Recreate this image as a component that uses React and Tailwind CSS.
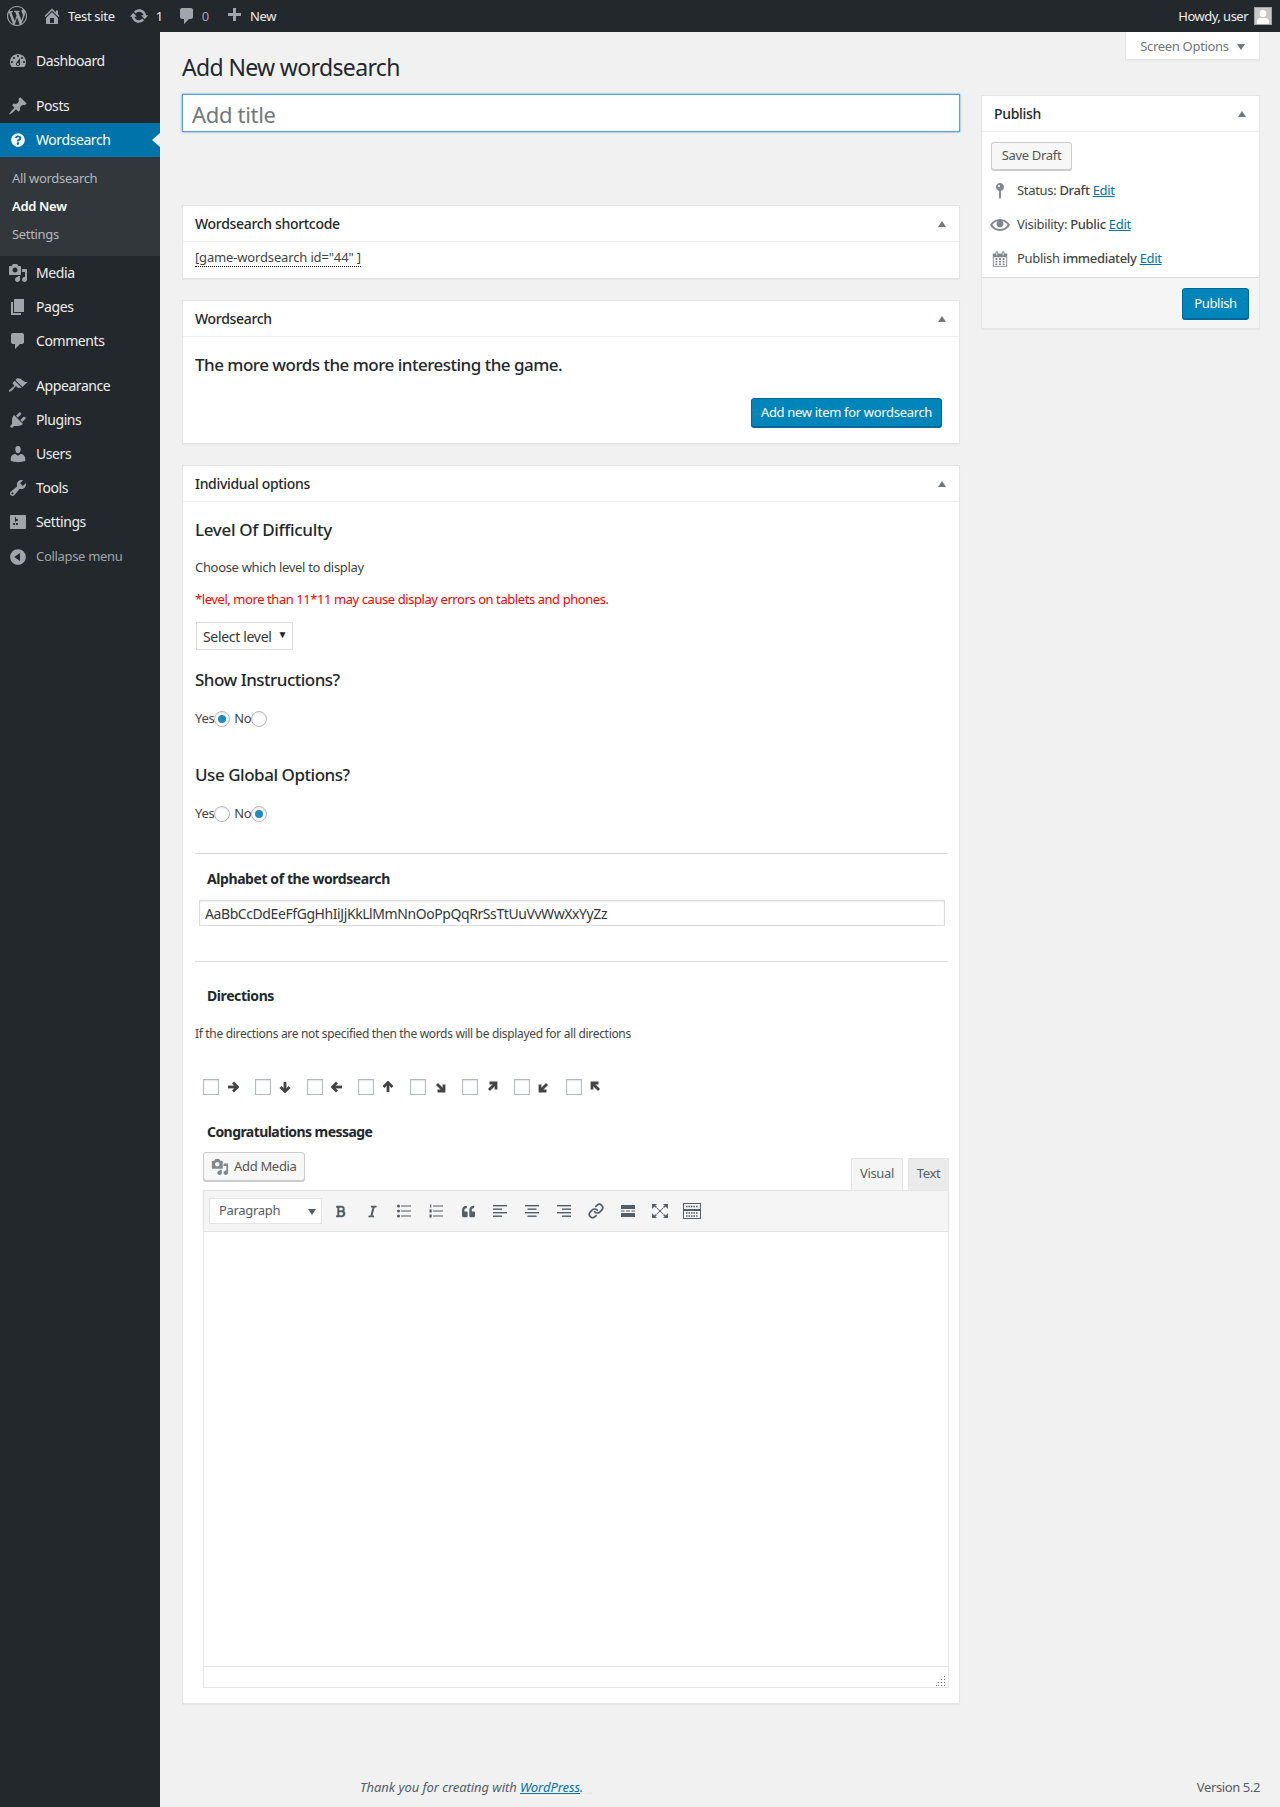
import React from 'react';
import { FaBold, FaItalic, FaQuoteLeft, FaQuestionCircle, FaUser } from 'react-icons/fa';
import { Link as LinkIcon } from 'lucide-react';

// dashicons paths, all on a 20x20 box
const icons = {
  logo: 'M20 10c0-5.51-4.49-10-10-10C4.48 0 0 4.49 0 10c0 5.52 4.48 10 10 10 5.51 0 10-4.48 10-10zM7.78 15.37L4.37 6.22c.55-.02 1.17-.08 1.17-.08.5-.06.44-1.13-.06-1.11 0 0-1.45.11-2.37.11-.18 0-.37 0-.58-.01C4.12 2.69 6.87 1.11 10 1.11c2.33 0 4.45.87 6.05 2.34-.68-.11-1.65.39-1.65 1.58 0 .74.45 1.36.9 2.1.35.61.55 1.36.55 2.46 0 1.49-1.4 5-1.4 5l-3.03-8.37c.54-.02.82-.17.82-.17.5-.05.44-1.25-.06-1.22 0 0-1.44.12-2.38.12-.87 0-2.33-.12-2.33-.12-.5-.03-.56 1.2-.06 1.22l.92.08 1.26 3.41zM17.41 10c.24-.64.74-1.87.43-4.25.7 1.29 1.05 2.71 1.05 4.25 0 3.29-1.73 6.24-4.4 7.78.97-2.59 1.94-5.2 2.92-7.78zM6.1 18.09C3.12 16.65 1.11 13.53 1.11 10c0-1.3.23-2.48.72-3.59C3.25 10.3 4.67 14.2 6.1 18.09zm4.03-6.63l2.58 6.98c-.86.29-1.76.45-2.71.45-.79 0-1.57-.11-2.29-.33.81-2.38 1.62-4.74 2.42-7.1z',
  home: 'M16 8.5l1.53 1.53-1.06 1.06L10 4.62l-6.47 6.47-1.06-1.06L10 2.5l4 4v-2h2v4zm-6-2.46l6 5.99V18H4v-5.97zM12 17v-5H8v5h4z',
  update: 'M10.2 3.28c3.53 0 6.43 2.61 6.92 6h2.08l-3.5 4-3.5-4h2.32c-.45-1.97-2.21-3.45-4.32-3.45-1.45 0-2.73.71-3.54 1.78L4.95 5.66C6.23 4.2 8.11 3.28 10.2 3.28zm-.4 13.44c-3.52 0-6.43-2.61-6.92-6H.8l3.5-4c1.17 1.33 2.33 2.67 3.5 4H5.48c.45 1.97 2.21 3.45 4.32 3.45 1.45 0 2.73-.71 3.54-1.78l1.71 1.95c-1.28 1.46-3.15 2.38-5.25 2.38z',
  plus: 'M17 7v3h-5v5H9v-5H4V7h5V2h3v5h5z',
  dashboard: 'M3.76 16h12.48c1.1-1.37 1.76-3.11 1.76-5 0-4.42-3.58-8-8-8s-8 3.58-8 8c0 1.89.66 3.63 1.76 5zM10 4c.55 0 1 .45 1 1s-.45 1-1 1-1-.45-1-1 .45-1 1-1zM6 6c.55 0 1 .45 1 1s-.45 1-1 1-1-.45-1-1 .45-1 1-1zm8 0c.55 0 1 .45 1 1s-.45 1-1 1-1-.45-1-1 .45-1 1-1zm-5.37 5.55L12 7v6c0 1.1-.9 2-2 2s-2-.9-2-2c0-.57.24-1.08.63-1.45zM4 10c.55 0 1 .45 1 1s-.45 1-1 1-1-.45-1-1 .45-1 1-1zm12 0c.55 0 1 .45 1 1s-.45 1-1 1-1-.45-1-1 .45-1 1-1zm-5 3c0-.55-.45-1-1-1s-1 .45-1 1 .45 1 1 1 1-.45 1-1z',
  post: 'M10.44 3.02l1.82-1.82 6.36 6.35-1.83 1.82c-1.05-.68-2.48-.57-3.41.36l-.75.75c-.92.93-1.04 2.35-.35 3.41l-1.83 1.82-2.41-2.41-2.8 2.79c-.42.42-3.38 2.71-3.8 2.29s1.86-3.39 2.28-3.81l2.79-2.79L4.1 9.36l1.83-1.82c1.05.69 2.48.57 3.4-.36l.75-.75c.93-.92 1.05-2.35.36-3.41z',
  media: 'M13 11V4c0-.55-.45-1-1-1h-1.67L9 1H5L3.67 3H2c-.55 0-1 .45-1 1v7c0 .55.45 1 1 1h10c.55 0 1-.45 1-1zM7 4.5c1.38 0 2.5 1.12 2.5 2.5S8.38 9.5 7 9.5 4.5 8.38 4.5 7 5.62 4.5 7 4.5zM14 6h5v10.5c0 1.38-1.12 2.5-2.5 2.5S14 17.88 14 16.5s1.12-2.5 2.5-2.5c.17 0 .34.02.5.05V9h-3V6zm-4 8.05V13h2v3.5c0 1.38-1.12 2.5-2.5 2.5S7 17.88 7 16.5 8.12 14 9.5 14c.17 0 .34.02.5.05z',
  page: 'M6 15V2h10v13H6zm-1 1h8v2H3V5h2v11z',
  comment: 'M5 2h9c1.1 0 2 .9 2 2v7c0 1.1-.9 2-2 2h-2l-5 5v-5H5c-1.1 0-2-.9-2-2V4c0-1.1.9-2 2-2z',
  appearance: 'M14.48 11.06L7.41 3.99l1.5-1.5c.5-.56 2.3-.47 3.51.32 1.21.8 1.43 1.28 2.91 2.1 1.18.64 2.45 1.26 4.45.85zm-.71.71L6.7 4.7 4.93 6.47c-.39.39-.39 1.02 0 1.41l1.06 1.06c.39.39.39 1.03 0 1.42-.6.6-1.43 1.11-2.21 1.69-.35.26-.7.53-1.01.84C1.43 13.23.4 14.91 1.06 15.57c.66.66 2.34-.37 3.68-1.71.31-.31.58-.66.84-1.01.58-.78 1.09-1.61 1.69-2.21.39-.39 1.03-.39 1.42 0l1.06 1.06c.39.39 1.02.39 1.41 0z',
  plugins: 'M13.11 4.36L9.87 7.6 8 5.73l3.24-3.24c.35-.34 1.05-.2 1.56.32.52.51.66 1.21.31 1.55zm-8 1.77l.91-1.12 9.01 9.01-1.19.84c-.71.71-2.63 1.16-3.82 1.16H6.14L4.9 17.26c-.59.59-1.54.59-2.12 0-.59-.58-.59-1.53 0-2.12l1.24-1.24v-3.88c0-1.13.4-3.19 1.09-3.89zm7.26 3.97l3.24-3.24c.34-.35 1.04-.21 1.55.31.52.51.66 1.21.31 1.55l-3.24 3.25z',
  users: 'M10 9.25c-2.27 0-2.73-3.44-2.73-3.44C7 4.02 7.82 2 9.97 2c2.16 0 2.98 2.02 2.71 3.81 0 0-.41 3.44-2.68 3.44zm0 2.57L12.72 10c2.39 0 4.52 2.33 4.52 4.53v2.49s-3.65 1.13-7.24 1.13c-3.65 0-7.24-1.13-7.24-1.13v-2.49c0-2.25 1.94-4.48 4.47-4.48z',
  tools: 'M16.68 9.77c-1.34 1.34-3.3 1.67-4.95.99l-5.41 6.52c-.99.99-2.59.99-3.58 0s-.99-2.59 0-3.57l6.52-5.42c-.68-1.65-.35-3.61.99-4.95 1.28-1.28 3.12-1.62 4.72-1.06l-2.89 2.89 2.82 2.82 2.86-2.87c.53 1.58.18 3.39-1.08 4.65zM3.81 16.21c.4.39 1.04.39 1.43 0 .4-.4.4-1.04 0-1.43-.39-.4-1.03-.4-1.43 0-.39.39-.39 1.03 0 1.43z',
  settings: 'M18 16V4c0-.55-.45-1-1-1H3c-.55 0-1 .45-1 1v12c0 .55.45 1 1 1h14c.55 0 1-.45 1-1zM8 11h1c.55 0 1 .45 1 1s-.45 1-1 1H8v1.5c0 .28-.22.5-.5.5s-.5-.22-.5-.5V13H6c-.55 0-1-.45-1-1s.45-1 1-1h1V5.5c0-.28.22-.5.5-.5s.5.22.5.5V7h1c.55 0 1 .45 1 1s-.45 1-1 1h-1v5.5c0 .28-.22.5-.5.5s-.5-.22-.5-.5V9z',
  collapse: 'M10 2.16c4.33 0 7.84 3.51 7.84 7.84s-3.51 7.84-7.84 7.84S2.16 14.33 2.16 10 5.71 2.16 10 2.16zm2 11.72V6.12L6.18 9.97z',
  pin: 'M14 6c0 1.86-1.28 3.41-3 3.86V16c0 1-1 2-1 2s-1-1-1-2V9.86C7.28 9.41 6 7.86 6 6c0-2.21 1.79-4 4-4s4 1.79 4 4zM8 5c0 .55.45 1 1 1s1-.45 1-1-.45-1-1-1-1 .45-1 1z',
  eye: 'M19.7 9.4C17.7 6 14 3.9 10 3.9S2.3 6 .3 9.4L0 10l.3.6c2 3.4 5.7 5.5 9.7 5.5s7.7-2.1 9.7-5.5l.3-.6-.3-.6zM10 14.1c-3.1 0-6-1.6-7.7-4.1C3.6 8 5.7 6.6 8 6.1c-.9.6-1.5 1.7-1.5 2.9 0 1.9 1.6 3.5 3.5 3.5s3.5-1.6 3.5-3.5c0-1.2-.6-2.3-1.5-2.9 2.3.5 4.4 1.9 5.7 3.9-1.7 2.5-4.6 4.1-7.7 4.1z',
  calendar: 'M15 4h3v15H2V4h3V3c0-.41.15-.76.44-1.06.29-.29.65-.44 1.06-.44s.77.15 1.06.44c.29.3.44.65.44 1.06v1h4V3c0-.41.15-.76.44-1.06.29-.29.65-.44 1.06-.44s.77.15 1.06.44c.29.3.44.65.44 1.06v1zM6 3v2.5c0 .14.05.26.15.36.09.09.21.14.35.14s.26-.05.35-.14c.1-.1.15-.22.15-.36V3c0-.14-.05-.26-.15-.36-.09-.09-.21-.14-.35-.14s-.26.05-.35.14c-.1.1-.15.22-.15.36zm7 0v2.5c0 .14.05.26.14.36.1.09.22.14.36.14s.26-.05.36-.14c.09-.1.14-.22.14-.36V3c0-.14-.05-.26-.14-.36-.1-.09-.22-.14-.36-.14s-.26.05-.36.14c-.09.1-.14.22-.14.36zm4 15V8H3v10h14zM7 9v2H5V9h2zm2 0h2v2H9V9zm4 2V9h2v2h-2zm-6 1v2H5v-2h2zm2 0h2v2H9v-2zm4 2v-2h2v2h-2zm-6 1v2H5v-2h2zm4 2H9v-2h2v2zm4 0h-2v-2h2v2z',
};

const Dash = ({ name, className }) => (
  <svg viewBox="0 0 20 20" className={className} fill="currentColor" fillRule="evenodd">
    <path d={icons[name]} />
  </svg>
);

const menuTop = [{ label: 'Dashboard', icon: 'dashboard', cls: 'mt-3 mb-[11px]' }, { label: 'Posts', icon: 'post', cls: '' }];
const menuMid = [
  { label: 'Media', icon: 'media' },
  { label: 'Pages', icon: 'page' },
  { label: 'Comments', icon: 'comment' },
];
const menuBottom = [
  { label: 'Appearance', icon: 'appearance' },
  { label: 'Plugins', icon: 'plugins' },
  { label: 'Users', icon: 'users' },
  { label: 'Tools', icon: 'tools' },
  { label: 'Settings', icon: 'settings' },
];

const MenuItem = ({ label, icon, className = '' }) => (
  <div className={`flex h-[34px] items-center text-sm tracking-[-0.03em] text-[#eeeeee] ${className}`}>
    <Dash name={icon} className="ml-2 mr-2 h-5 w-5 text-[#a0a5aa]" />
    {label}
  </div>
);

const Sidebar = () => (
  <aside className="w-40 shrink-0 bg-[#23282d]">
    {menuTop.map((m) => (
      <MenuItem key={m.label} label={m.label} icon={m.icon} className={m.cls} />
    ))}
    <div className="relative flex h-[34px] items-center bg-[#0073aa] text-sm tracking-[-0.03em] text-white">
      <FaQuestionCircle className="ml-[11px] mr-[11px] h-[14px] w-[14px]" />
      Wordsearch
      <span className="absolute right-0 top-[10px] h-0 w-0 border-y-[7px] border-r-[8px] border-y-transparent border-r-[#f1f1f1]" />
    </div>
    <div className="bg-[#32373c] pb-2 pt-[7px] text-[13px] leading-[28px] text-[#b4b9be]">
      <div className="pl-3">All wordsearch</div>
      <div className="pl-3 font-semibold text-white">Add New</div>
      <div className="pl-3">Settings</div>
    </div>
    {menuMid.map((m) => (
      <MenuItem key={m.label} label={m.label} icon={m.icon} />
    ))}
    <div className="h-[11px]" />
    {menuBottom.map((m) => (
      <MenuItem key={m.label} label={m.label} icon={m.icon} />
    ))}
    <div className="flex h-[34px] items-center pt-px text-[13px] text-[#a0a5aa]">
      <Dash name="collapse" className="ml-2 mr-2 h-5 w-5" />
      Collapse menu
    </div>
  </aside>
);

const TopBar = () => (
  <header className="flex h-8 items-center justify-between bg-[#23282d] text-[13px] text-[#eeeeee]">
    <div className="flex items-center">
      <Dash name="logo" className="ml-[7px] h-5 w-5 text-[#a0a5aa]" />
      <Dash name="home" className="ml-[15px] h-5 w-5 text-[#a0a5aa]" />
      <span className="ml-[6px] pt-px">Test site</span>
      <Dash name="update" className="ml-[14px] h-5 w-5 text-[#a0a5aa]" />
      <span className="ml-[7px] pt-px">1</span>
      <Dash name="comment" className="ml-[14px] h-5 w-5 text-[#a0a5aa]" />
      <span className="ml-[5px] pt-px text-[#a0a5aa]">0</span>
      <Dash name="plus" className="ml-[15px] h-5 w-5 text-[#a0a5aa]" />
      <span className="ml-[6px] pt-px">New</span>
    </div>
    <div className="flex items-center">
      <span className="pt-px tracking-[-0.04em]">Howdy, user</span>
      <span className="ml-[6px] mr-2 flex h-[18px] w-[18px] items-end justify-center overflow-hidden border border-[#a0a5aa] bg-[#c8c8c8]">
        <FaUser className="h-[14px] w-[14px] text-white" />
      </span>
    </div>
  </header>
);

const Triangle = () => (
  <span className="h-0 w-0 border-x-[4px] border-b-[6px] border-x-transparent border-b-[#72777c]" />
);

const Card = ({ title, className = '', children }) => (
  <section className={`border border-[#e5e5e5] bg-white shadow-[0_1px_1px_rgba(0,0,0,0.04)] ${className}`}>
    <div className="flex h-9 items-center justify-between border-b border-[#eeeeee] pl-3 pr-[13px] text-sm font-medium text-[#23282d]">
      {title}
      <Triangle />
    </div>
    {children}
  </section>
);

const Radio = ({ checked }) => (
  <span className="flex h-4 w-4 items-center justify-center rounded-full border border-[#b4b9be] bg-white shadow-[inset_0_1px_2px_rgba(0,0,0,0.1)]">
    {checked && <span className="h-2 w-2 rounded-full bg-[#1e8cbe]" />}
  </span>
);

const RadioRow = ({ yes, className = '' }) => (
  <div className={`flex h-[18px] items-center text-[13px] text-[#444444] ${className}`}>
    Yes
    <Radio checked={yes} />
    <span className="ml-[4px]">No</span>
    <Radio checked={!yes} />
  </div>
);

// arrows for the directions row: a stem and a head, on a 12x12 box
const arrows = [
  ['M1 6h9', 'M6 1.5 10.5 6 6 10.5'],
  ['M6 1v9', 'M1.5 6 6 10.5 10.5 6'],
  ['M11 6H2', 'M6 1.5 1.5 6 6 10.5'],
  ['M6 11V2', 'M1.5 6 6 1.5 10.5 6'],
  ['M3 3l6 6', 'M10 3.5V10H3.5'],
  ['M3 9l6-6', 'M3.5 2H10v6.5'],
  ['M9 3 3 9', 'M2 3.5V10h6.5'],
  ['M9 9 3 3', 'M8.5 2H2v6.5'],
];

const Directions = () => (
  <div className="mt-9 flex h-4 pl-2">
    {arrows.map((a, i) => (
      <div key={i} className="flex w-[51.8px] items-center">
        <span className="h-4 w-4 border border-[#b4b9be] bg-white shadow-[inset_0_1px_2px_rgba(0,0,0,0.1)]" />
        <svg viewBox="0 0 12 12" className="ml-[8px] h-3 w-3 text-[#444444]" fill="none" stroke="currentColor" strokeWidth="2.8">
          <path d={a[0]} />
          <path d={a[1]} />
        </svg>
      </div>
    ))}
  </div>
);

const Lines = ({ rows }) => (
  <svg viewBox="0 0 14 14" className="h-[14px] w-[14px] text-[#555d66]" fill="currentColor">
    {rows.map((r) => (
      <rect key={r[1]} x={r[0]} y={r[1]} width={r[2]} height={r[3]} />
    ))}
  </svg>
);

const ToolBtn = ({ children }) => (
  <span className="flex w-8 shrink-0 items-center justify-center text-[#555d66]">{children}</span>
);

const Toolbar = () => (
  <div className="flex h-[42px] items-center border border-[#e5e5e5] bg-[#f5f5f5] pl-[5px] shadow-[0_1px_2px_rgba(0,0,0,0.1)]">
    <div className="relative mr-[2px] flex h-[26px] w-[113px] items-center border border-[#e5e5e5] bg-white pl-[9px] text-[13px] text-[#555d66]">
      Paragraph
      <span className="absolute right-[5px] top-[10px] h-0 w-0 border-x-[4px] border-t-[6px] border-x-transparent border-t-[#555d66]" />
    </div>
    <ToolBtn><FaBold className="h-[13px] w-[13px]" /></ToolBtn>
    <ToolBtn><FaItalic className="h-[13px] w-[13px]" /></ToolBtn>
    <ToolBtn>
      <svg viewBox="0 0 14 14" className="h-[14px] w-[14px]" fill="currentColor">
        <circle cx="1.5" cy="2" r="1.5" /><circle cx="1.5" cy="7" r="1.5" /><circle cx="1.5" cy="12" r="1.5" />
        <rect x="4" y="1.5" width="10" height="1" /><rect x="4" y="6.5" width="10" height="1" /><rect x="4" y="11.5" width="10" height="1" />
      </svg>
    </ToolBtn>
    <ToolBtn>
      <svg viewBox="0 0 14 14" className="h-[14px] w-[14px]" fill="currentColor">
        <rect x="1" y="0.5" width="1.2" height="3" /><rect x="0.5" y="5.5" width="2.2" height="3" /><rect x="0.5" y="10.5" width="2.2" height="3" />
        <rect x="4" y="1.5" width="10" height="1" /><rect x="4" y="6.5" width="10" height="1" /><rect x="4" y="11.5" width="10" height="1" />
      </svg>
    </ToolBtn>
    <ToolBtn><FaQuoteLeft className="h-[13px] w-[13px]" /></ToolBtn>
    <ToolBtn><Lines rows={[[0, 1, 14, 1.4], [0, 4.5, 9, 1.4], [0, 8, 14, 1.4], [0, 11.5, 9, 1.4]]} /></ToolBtn>
    <ToolBtn><Lines rows={[[0, 1, 14, 1.4], [2.5, 4.5, 9, 1.4], [0, 8, 14, 1.4], [2.5, 11.5, 9, 1.4]]} /></ToolBtn>
    <ToolBtn><Lines rows={[[0, 1, 14, 1.4], [5, 4.5, 9, 1.4], [0, 8, 14, 1.4], [5, 11.5, 9, 1.4]]} /></ToolBtn>
    <ToolBtn><LinkIcon className="h-4 w-4" strokeWidth={2.6} /></ToolBtn>
    <ToolBtn><Lines rows={[[0, 1, 14, 4], [0, 6.5, 3.5, 1], [5, 6.5, 4, 1], [10.5, 6.5, 3.5, 1], [0, 9, 14, 4]]} /></ToolBtn>
    <ToolBtn>
      <svg viewBox="0 0 16 14" className="h-[14px] w-4" fill="currentColor">
        <path d="M0 0h5L3.4 1.6 5 3 4 4 2.4 2.6 0 5zM16 0h-5l1.6 1.6L11 3l1 1 1.6-1.4L16 5zM0 14h5l-1.6-1.6L5 11l-1-1-1.6 1.4L0 9zM16 14h-5l1.6-1.6L11 11l1-1 1.6 1.4L16 9z" />
        <path d="M5 4l6 6M11 4l-6 6" stroke="currentColor" strokeWidth="1" fill="none" />
      </svg>
    </ToolBtn>
    <ToolBtn>
      <svg viewBox="0 0 18 16" className="h-4 w-[18px]" fill="none" stroke="currentColor">
        <rect x="0.5" y="0.5" width="17" height="6" /><rect x="0.5" y="7.5" width="17" height="8" />
        <path d="M3 3.5h12M3 10h12M3 13h12" strokeDasharray="1.5 1" strokeWidth="1.4" />
      </svg>
    </ToolBtn>
  </div>
);

const Editor = () => (
  <div className="ml-2 mr-[-1px] mt-[10px]">
    <div className="flex h-[38px] justify-between">
      <button className="flex h-[29px] items-center rounded-[3px] border border-[#cccccc] bg-[#f7f7f7] pl-[7px] pr-[7px] text-[13px] text-[#555555] shadow-[0_1px_0_#cccccc]">
        <Dash name="media" className="mr-[5px] h-[18px] w-[18px] text-[#82878c]" />
        Add Media
      </button>
      <div className="flex items-end gap-[5px]">
        <span className="flex h-8 w-[52px] items-center justify-center border border-b-0 border-[#e5e5e5] bg-[#f5f5f5] pb-[2px] text-[13px] text-[#555d66]">Visual</span>
        <span className="flex h-8 w-[41px] items-center justify-center border border-b-0 border-[#e5e5e5] bg-[#ebebeb] pb-[2px] text-[13px] text-[#555d66]">Text</span>
      </div>
    </div>
    <Toolbar />
    <div className="h-[434px] border-x border-[#e5e5e5] bg-white" />
    <div className="flex h-[22px] items-end justify-end border border-[#e5e5e5] bg-white pb-[1px] pr-[2px]">
      <svg viewBox="0 0 10 10" className="h-[10px] w-[10px] text-[#72777c]" fill="currentColor">
        <path d="M8 0h1v1H8zM8 3h1v1H8zM5 3h1v1H5zM8 6h1v1H8zM5 6h1v1H5zM2 6h1v1H2zM8 9h1v1H8zM5 9h1v1H5zM2 9h1v1H2zM0 9h1v1H0z" />
      </svg>
    </div>
  </div>
);

const MainColumn = () => (
  <div className="w-[778px] shrink-0">
    <input
      readOnly
      placeholder="Add title"
      className="h-[38px] w-full border border-[#5b9dd9] bg-white pl-[9px] pr-2 pt-[2px] text-[22px] text-[#23282d] shadow-[0_0_2px_rgba(30,140,190,0.8)] outline-none placeholder:text-[#72777c]"
    />

    <Card title="Wordsearch shortcode" className="mt-[73px] h-[74px]">
      <div className="pl-3 pt-[6px] text-[13px] leading-[18px] tracking-[-0.012em] text-[#444444]">
        <span className="border-b border-dotted border-black">[game-wordsearch id="44" ]</span>
      </div>
    </Card>

    <Card title="Wordsearch" className="mt-[21px] h-[144px]">
      <div className="relative px-3">
        <p className="pt-[16px] text-[17px] font-medium leading-6 tracking-[-0.03em] text-[#23282d]">The more words the more interesting the game.</p>
        <div className="mt-[21px] flex justify-end pr-[5px]">
          <button className="flex h-[29px] w-[191px] items-center justify-center rounded-[3px] border border-[#006799] bg-[#0085ba] text-[13px] text-white shadow-[0_1px_0_#006799]">
            Add new item for wordsearch
          </button>
        </div>
      </div>
    </Card>

    <Card title="Individual options" className="mt-[21px]">
      <div className="pb-[15px] pl-3 pr-[11px]">
        <h3 className="mt-[16px] text-[17px] font-medium leading-6 text-[#23282d]">Level Of Difficulty</h3>
        <p className="mt-4 text-[13px] leading-[18px] text-[#444444]">Choose which level to display</p>
        <p className="mt-[14px] text-[13px] leading-[18px] tracking-[-0.033em] text-[#ff0000]">*level, more than 11*11 may cause display errors on tablets and phones.</p>
        <div className="ml-[1px] mt-[14px] flex h-7 w-[97px] items-center justify-between border border-[#dddddd] pl-[6px] pr-[5px] pt-px text-sm text-[#32373c]">
          Select level
          <span className="-mt-1 text-[10px] text-[#222222]">▼</span>
        </div>
        <h3 className="mt-[18px] text-[17px] font-medium leading-6 tracking-[-0.03em] text-[#23282d]">Show Instructions?</h3>
        <RadioRow yes className="mt-[18px]" />
        <h3 className="mt-[35px] text-[17px] font-medium leading-6 tracking-[-0.027em] text-[#23282d]">Use Global Options?</h3>
        <RadioRow yes={false} className="mt-[18px]" />
        <hr className="mt-[30px] border-[#dddddd]" />
        <h4 className="ml-3 mt-[15px] text-sm font-bold leading-5 tracking-[-0.03em] text-[#23282d]">Alphabet of the wordsearch</h4>
        <input
          readOnly
          value="AaBbCcDdEeFfGgHhIiJjKkLlMmNnOoPpQqRrSsTtUuVvWwXxYyZz"
          className="ml-1 mt-[11px] h-[26px] w-[746px] border border-[#dddddd] bg-white px-[5px] text-sm tracking-[-0.03em] text-[#32373c] shadow-[inset_0_1px_2px_rgba(0,0,0,0.07)] outline-none"
        />
        <hr className="mt-[35px] border-[#dddddd]" />
        <h4 className="ml-3 mt-6 text-sm font-bold leading-5 tracking-[-0.03em] text-[#23282d]">Directions</h4>
        <p className="mt-[19px] text-xs leading-[18px] text-[#444444]">If the directions are not specified then the words will be displayed for all directions</p>
        <Directions />
        <h4 className="ml-3 mt-[27px] text-sm font-bold leading-5 tracking-[-0.04em] text-[#23282d]">Congratulations message</h4>
        <Editor />
      </div>
    </Card>
  </div>
);

const PublishRow = ({ icon, iconCls, children, className = '' }) => (
  <div className={`flex h-5 items-center text-[13px] text-[#444444] ${className}`}>
    <span className="flex w-[18px] justify-center text-[#82878c]">
      <Dash name={icon} className={`shrink-0 ${iconCls}`} />
    </span>
    <span className="ml-2">{children}</span>
  </div>
);

const Edit = () => <a className="text-[#0073aa] underline">Edit</a>;

const PublishBox = () => (
  <Card title="Publish" className="mt-[1px] h-[234px] w-[279px] shrink-0">
    <div className="px-[9px] pt-[10px]">
      <button className="h-7 w-[81px] rounded-[3px] border border-[#cccccc] bg-[#f7f7f7] text-[13px] text-[#555555] shadow-[0_1px_0_#cccccc]">Save Draft</button>
      <PublishRow icon="pin" iconCls="h-5 w-5" className="mt-[11px]">Status: <b className="font-medium">Draft</b> <Edit /></PublishRow>
      <PublishRow icon="eye" iconCls="h-5 w-5" className="mt-[14px]">Visibility: <b className="font-medium">Public</b> <Edit /></PublishRow>
      <PublishRow icon="calendar" iconCls="h-[18px] w-[18px]" className="mt-[14px]">Publish <b className="font-medium">immediately</b> <Edit /></PublishRow>
    </div>
    <div className="mt-[8px] flex h-[51px] items-start justify-end border-t border-[#dddddd] bg-[#f5f5f5] pr-[10px] pt-[10px]">
      <button className="h-[31px] w-[67px] rounded-[3px] border border-[#006799] bg-[#0085ba] text-[13px] text-white shadow-[0_1px_0_#006799]">Publish</button>
    </div>
  </Card>
);

const App = () => (
  <div className="flex min-h-screen flex-col bg-[#f1f1f1] font-['Noto_Sans',sans-serif] tracking-[-0.02em]">
    <TopBar />
    <div className="flex flex-1">
      <Sidebar />
      <main className="flex flex-1 flex-col pl-[22px] pr-5">
        <div className="flex h-[62px] items-start justify-between">
          <h1 className="mt-5 text-[23px] leading-[30px] tracking-[-0.028em] text-[#23282d]">Add New wordsearch</h1>
          <div className="flex h-7 w-[135px] items-center justify-center gap-[8px] border border-t-0 border-[#e5e5e5] bg-white pt-[2px] text-[13px] text-[#72777c] shadow-[0_1px_1px_rgba(0,0,0,0.04)]">
            Screen Options
            <span className="h-0 w-0 border-x-[4px] border-t-[6px] border-x-transparent border-t-[#72777c]" />
          </div>
        </div>
        <div className="flex gap-[21px]">
          <MainColumn />
          <PublishBox />
        </div>
        <footer className="mt-auto flex h-[38px] items-center justify-between text-[13px] text-[#555d66]">
          <p className="ml-[178px] italic tracking-[-0.005em]">Thank you for creating with <a className="text-[#0073aa] underline">WordPress</a>.</p>
          <p className="tracking-[-0.03em]">Version 5.2</p>
        </footer>
      </main>
    </div>
  </div>
);

export default App;
